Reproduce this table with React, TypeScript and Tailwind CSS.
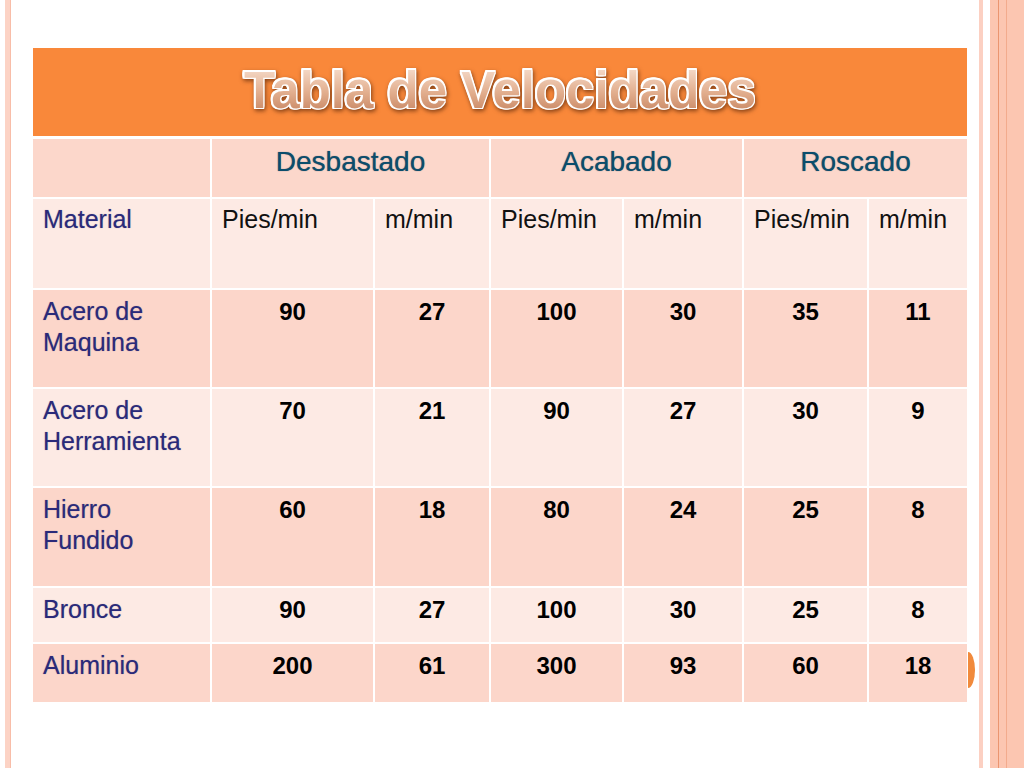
import React from "react"

const ROWS = [
  { name: ["Acero de", "Maquina"], values: [90, 27, 100, 30, 35, 11], dark: true, h: "h-[97px]" },
  { name: ["Acero de", "Herramienta"], values: [70, 21, 90, 27, 30, 9], dark: false, h: "h-[97px]" },
  { name: ["Hierro", "Fundido"], values: [60, 18, 80, 24, 25, 8], dark: true, h: "h-[98px]" },
  { name: ["Bronce"], values: [90, 27, 100, 30, 25, 8], dark: false, h: "h-[54px]" },
  { name: ["Aluminio"], values: [200, 61, 300, 93, 60, 18], dark: true, h: "h-[58px]" },
]

const GROUPS = ["Desbastado", "Acabado", "Roscado"]
const UNITS = ["Pies/min", "m/min", "Pies/min", "m/min", "Pies/min", "m/min"]

export default function App() {
  return (
    <div className="w-[1024px] h-[768px] bg-white flex font-['Liberation_Sans',Arial,sans-serif] overflow-hidden">
      {/* left slide border */}
      <div className="w-[5px] shrink-0" />
      <div className="w-[6px] shrink-0 bg-[#fcd3c5] border-r border-[#f8bda8]" />

      {/* slide content */}
      <div className="flex-1 pl-[22px] pr-[12px] pt-[48px] relative">
        <div className="grid grid-cols-[177px_161px_114px_131px_118px_123px_98px] gap-[2px]">
          {/* title */}
          <div className="col-span-7 h-[88px] mb-px bg-[#f9883a] flex items-center justify-center">
            <h1 className="text-[51px] font-bold leading-none pb-[4px] bg-linear-to-b from-[#f7e0d0] via-[#e2ae8e] to-[#bf7a55] bg-clip-text text-transparent [filter:drop-shadow(1.5px_0_0_#fff)_drop-shadow(-1.5px_0_0_#fff)_drop-shadow(0_1.5px_0_#fff)_drop-shadow(0_-1.5px_0_#fff)_drop-shadow(1px_2px_2px_rgba(60,20,0,0.6))]">
              Tabla de Velocidades
            </h1>
          </div>

          {/* group header */}
          <div className="h-[58px] bg-[#fcd7cb]" />
          {GROUPS.map((g) => (
            <div
              key={g}
              className="col-span-2 h-[58px] bg-[#fcd7cb] pt-[6px] text-center text-[28px] leading-[34px] text-[#0b4d6c] [text-shadow:0_0_1px_rgba(0,30,50,0.6)]"
            >
              {g}
            </div>
          ))}

          {/* units header */}
          <div className="h-[89px] bg-[#fdeae4] pl-[10px] pt-[5px] text-[25px] leading-[30px] text-[#2a2a7a] [text-shadow:0_0_1px_rgba(20,20,80,0.4)]">
            Material
          </div>
          {UNITS.map((u, i) => (
            <div
              key={i}
              className="h-[89px] bg-[#fdeae4] pl-[10px] pt-[5px] text-[25px] leading-[30px] text-[#111]"
            >
              {u}
            </div>
          ))}

          {/* data */}
          {ROWS.map((row) => (
            <React.Fragment key={row.name.join(" ")}>
              <div
                className={`${row.h} ${row.dark ? "bg-[#fcd6ca]" : "bg-[#fdeae4]"} pl-[10px] pt-[6px] text-[25px] leading-[31px] text-[#2a2a7a] [text-shadow:0_0_1px_rgba(20,20,80,0.4)]`}
              >
                {row.name.map((n) => (
                  <div key={n}>{n}</div>
                ))}
              </div>
              {row.values.map((v, i) => (
                <div
                  key={i}
                  className={`${row.h} ${row.dark ? "bg-[#fcd6ca]" : "bg-[#fdeae4]"} pt-[7px] text-center text-[24px] leading-[30px] font-bold text-black`}
                >
                  {v}
                </div>
              ))}
            </React.Fragment>
          ))}
        </div>

        {/* slide number disc peeking out from behind the table */}
        <div className="absolute left-[957px] top-[652px] w-[7px] h-[36px] rounded-r-[100%_50%] bg-[#f18a3c]" />
      </div>

      {/* right slide border */}
      <div className="w-[4px] shrink-0 bg-[#fcd0c2]" />
      <div className="w-[7px] shrink-0" />
      <div className="w-[34px] shrink-0 bg-[#fcc6b1] flex">
        <div className="w-[8px]" />
        <div className="w-[1px] bg-[#eb9570]" />
        <div className="w-[7px]" />
        <div className="w-[1px] bg-[#f3ab8d]" />
      </div>
    </div>
  )
}
